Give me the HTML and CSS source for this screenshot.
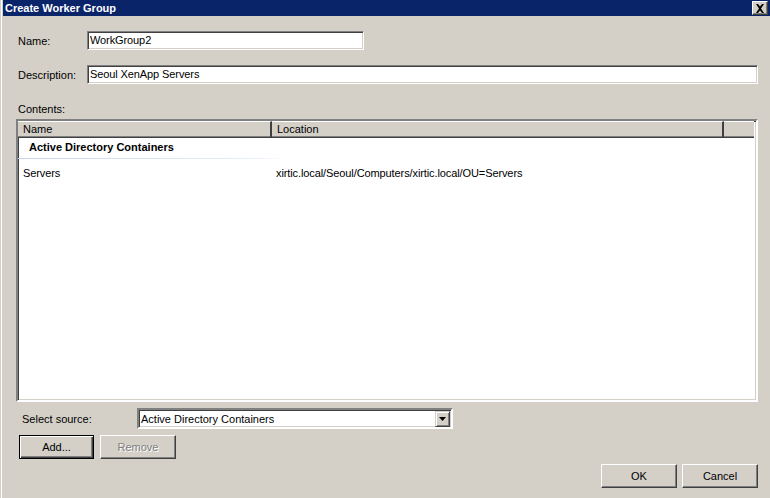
FILE: index.html
```html
<!DOCTYPE html>
<html>
  <head>
    <title>Create Worker Group</title>
    <meta charset="UTF-8">
    <link rel="stylesheet" href="styles.css">
  </head>
  <body>
    <div class="window">
      <div class="titlebar">
        <span class="title">Create Worker Group</span>
        <span class="close-btn">
          <svg width="10" height="9" viewBox="0 0 10 9">
            <path d="M1 0h2l2 2.5L7 0h2L6 4.5 9 9H7L5 6.5 3 9H1l3-4.5z" fill="#000"/>
          </svg>
        </span>
      </div>
      <div class="content">
        <div class="row name-row">
          <label class="label">Name:</label>
          <div class="field name-field">WorkGroup2</div>
        </div>
        <div class="row desc-row">
          <label class="label">Description:</label>
          <div class="field desc-field">Seoul XenApp Servers</div>
        </div>
        <div class="contents-label">Contents:</div>
        <div class="listview">
          <div class="list-header">
            <div class="col col-name">Name</div>
            <div class="col col-location">Location</div>
            <div class="col col-rest"></div>
          </div>
          <div class="group-row">Active Directory Containers</div>
          <div class="item-row">
            <span class="cell-name">Servers</span>
            <span class="cell-location">xirtic.local/Seoul/Computers/xirtic.local/OU=Servers</span>
          </div>
        </div>
        <div class="row source-row">
          <label class="source-label">Select source:</label>
          <div class="combo">
            <span class="combo-text">Active Directory Containers</span>
            <span class="combo-btn">
              <svg width="7" height="4" viewBox="0 0 7 4"><path d="M0 0h7L3.5 4z" fill="#000"/></svg>
            </span>
          </div>
        </div>
        <div class="row action-row">
          <button class="btn btn-default">Add...</button>
          <button class="btn btn-disabled">Remove</button>
        </div>
        <div class="row footer-row">
          <button class="btn">OK</button>
          <button class="btn">Cancel</button>
        </div>
      </div>
    </div>
  </body>
</html>
```

FILE: styles.css
```css
body {
  margin: 0;
  padding: 0;
  background-color: #d4d0c8;
  font-family: "Liberation Sans", Arial, sans-serif;
  font-size: 11px;
  color: #000;
  width: 770px;
  height: 498px;
  overflow: hidden;
}

.window {
  height: 498px;
  border-left: 1px solid #d4d0c8;
  box-shadow: inset 1px 0 #fff;
  padding-left: 2px;
}

.titlebar {
  height: 16px;
  background-color: #0a246a;
  display: flex;
  align-items: center;
  justify-content: space-between;
  padding: 0 2px 0 2px;
}

.title {
  color: #fff;
  font-weight: bold;
  font-size: 11px;
}

.close-btn {
  width: 14px;
  height: 12px;
  background-color: #d4d0c8;
  border: 1px solid;
  border-color: #fff #404040 #404040 #fff;
  box-shadow: inset -1px -1px #808080;
  display: flex;
  align-items: center;
  justify-content: center;
}

.content {
  padding: 15px 12px 0 15px;
}

.row {
  display: flex;
  align-items: center;
}

.label {
  width: 69px;
}

.field {
  height: 17px;
  line-height: 17px;
  padding: 0 2px;
  background-color: #fff;
  border: 1px solid;
  border-color: #808080 #fff #fff #808080;
  box-shadow: inset 1px 1px #404040, inset -1px -1px #d4d0c8;
  box-sizing: content-box;
  white-space: nowrap;
  letter-spacing: -0.1px;
}

.name-field {
  width: 271px;
}

.desc-field {
  flex: 1;
}

.name-row {
  margin-bottom: 15px;
}

.contents-label {
  margin-top: 19px;
  height: 13px;
  line-height: 13px;
}

.listview {
  margin: 3px 0 0 -2px;
  height: 279px;
  background-color: #fff;
  border: 2px solid;
  border-color: #808080 #fff #fff #808080;
  box-shadow: inset 1px 1px #404040, inset -1px -1px #d4d0c8;
  padding: 0 2px 0 0;
}

.list-header {
  display: flex;
  height: 17px;
}

.col {
  background-color: #d4d0c8;
  border-top: 1px solid #fff;
  border-bottom: 1px solid #404040;
  box-shadow: inset 0 -1px #808080;
  height: 15px;
  line-height: 15px;
  padding-left: 5px;
}

.col-name {
  width: 247px;
  border-right: 2px solid #404040;
}

.col-location {
  width: 445px;
  border-right: 2px solid #404040;
}

.col-rest {
  flex: 1;
}

.group-row {
  height: 20px;
  line-height: 18px;
  padding-left: 11px;
  font-weight: bold;
  width: 258px;
  border-bottom: 1px solid transparent;
  border-image: linear-gradient(to right, #c5d5ea, #e8eef8 85%, #fff) 1;
}

.item-row {
  display: flex;
  height: 29px;
  line-height: 29px;
  letter-spacing: -0.1px;
}

.cell-name {
  width: 253px;
  padding-left: 5px;
}

.source-row {
  margin-top: 6px;
  height: 21px;
}

.source-label {
  width: 115px;
  padding-left: 4px;
}

.combo {
  width: 312px;
  height: 17px;
  display: flex;
  align-items: center;
  justify-content: space-between;
  background-color: #fff;
  border: 2px solid;
  border-color: #808080 #fff #fff #808080;
  box-shadow: inset 1px 1px #404040, inset -1px -1px #d4d0c8;
}

.combo-text {
  padding-left: 2px;
}

.combo-btn {
  width: 13px;
  height: 14px;
  margin-right: 1px;
  background-color: #d4d0c8;
  border: 1px solid;
  border-color: #d4d0c8 #404040 #404040 #d4d0c8;
  box-shadow: inset 1px 1px #fff, inset -1px -1px #808080;
  display: flex;
  align-items: center;
  justify-content: center;
}

.btn {
  width: 76px;
  height: 24px;
  font-family: "Liberation Sans", Arial, sans-serif;
  font-size: 11px;
  color: #000;
  background-color: #d4d0c8;
  border: 1px solid;
  border-color: #fff #404040 #404040 #fff;
  box-shadow: inset -1px -1px #808080;
  padding: 0;
  margin: 0;
}

.action-row {
  margin-top: 6px;
  gap: 6px;
}

.btn-default {
  width: 75px;
  margin-left: 1px;
  border: 1px solid #000;
  box-shadow: inset 1px 1px #fff, inset -1px -1px #404040, inset -2px -2px #808080;
}

.btn-disabled {
  color: #808080;
  text-shadow: 1px 1px #fff;
}

.footer-row {
  margin-top: 5px;
  justify-content: flex-end;
  gap: 5px;
}
```
